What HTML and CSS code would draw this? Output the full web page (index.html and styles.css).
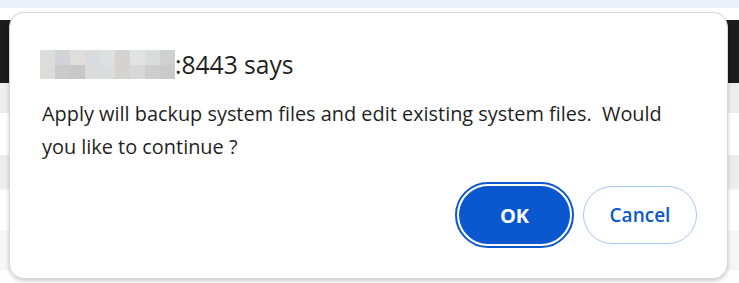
FILE: index.html
```html
<!DOCTYPE html>
<html>
<head>
<meta charset="utf-8">
<link rel="stylesheet" href="styles.css">
</head>
<body>
<div class="page">
  <div class="topstrip"></div>
  <div class="gapw"></div>
  <div class="darkbar"></div>
  <div class="row g1"></div>
  <div class="row w1"></div>
  <div class="row g2"></div>
  <div class="row w2"></div>
  <div class="row g3"></div>
  <div class="row w3"></div>
</div>
<div class="dialog">
  <div class="title">
    <span class="mosaic">
      <i style="background:#dcdcdc"></i><i style="background:#d1d3d6"></i><i style="background:#e0dddb"></i><i style="background:#d9dcde"></i><i style="background:#dde0e1"></i><i style="background:#d5d2cf"></i><i style="background:#e0e2e4"></i><i style="background:#dadcdc"></i><i style="background:#cfd0d1"></i>
      <i style="background:#dedad9"></i><i style="background:#c9cacc"></i><i style="background:#c8c7c5"></i><i style="background:#d8dcdb"></i><i style="background:#d9dddd"></i><i style="background:#d6d3cf"></i><i style="background:#d6d7d9"></i><i style="background:#cdcdcd"></i><i style="background:#c9caca"></i>
    </span><span class="host">:8443 says</span>
  </div>
  <div class="msg">Apply will backup system files and edit existing system files.&nbsp; Would you like to continue ?</div>
  <div class="buttons">
    <button class="btn ok">OK</button>
    <button class="btn cancel">Cancel</button>
  </div>
</div>
</body>
</html>
```
FILE: styles.css
```css
html, body {
  margin: 0;
  padding: 0;
}
body {
  width: 739px;
  height: 283px;
  overflow: hidden;
  background: #ffffff;
  font-family: "Open Sans", "Noto Sans", sans-serif;
  position: relative;
}
.page {
  display: flex;
  flex-direction: column;
}
.topstrip { height: 8px; background: #ebf1fa; }
.gapw { height: 12px; background: #ffffff; }
.darkbar { height: 63px; background: #1c1c1c; }
.row { width: 100%; }
.g1 { height: 30px; background: #ededed; }
.w1 { height: 42px; background: #ffffff; }
.g2 { height: 33px; background: #ececec; }
.w2 { height: 2px; background: #f4f4f4; }
.g3 { height: 40px; background: #ffffff; }
.w3 { height: 40px; background: #f6f6f6; }

.dialog {
  position: absolute;
  left: 9px;
  top: 12px;
  width: 719px;
  height: 267px;
  box-sizing: border-box;
  background: #ffffff;
  border: 1px solid #d6d6d6;
  border-radius: 15px;
  box-shadow: 0 2px 4px rgba(0,0,0,0.2);
  padding: 37px 30px 0 30px;
  display: flex;
  flex-direction: column;
}
.title {
  display: flex;
  align-items: center;
  height: 29px;
  font-size: 24.6px;
  color: #1f1f1f;
}
.mosaic {
  display: grid;
  grid-template-columns: repeat(9, 15px);
  grid-template-rows: 15px 14px;
  width: 135px;
  height: 29px;
}
.mosaic i { display: block; }
.host {
  line-height: 29px;
}
.msg {
  margin-top: 18px;
  padding-left: 2px;
  font-size: 19.9px;
  line-height: 33px;
  color: #1f1f1f;
  width: 630px;
}
.buttons {
  margin-top: 23px;
  display: flex;
  justify-content: flex-end;
  gap: 13px;
}
.btn {
  height: 58px;
  border-radius: 29px;
  font-family: "Open Sans", "Noto Sans", sans-serif;
  box-sizing: border-box;
  cursor: pointer;
}
.ok {
  width: 111px;
  background: #0b57d0;
  color: #ffffff;
  border: 1px solid #0b57d0;
  font-size: 20px;
  font-weight: 700;
  outline: 2px solid #0b57d0;
  outline-offset: 2px;
}
.cancel {
  width: 114px;
  background: #ffffff;
  color: #0b57d0;
  border: 1px solid #a8c7fa;
  font-size: 19px;
  font-weight: 600;
}
```
